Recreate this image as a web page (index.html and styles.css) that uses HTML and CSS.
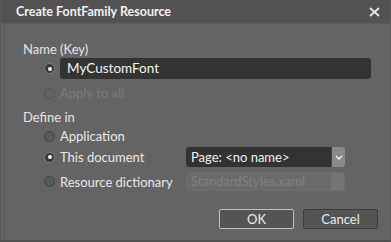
FILE: index.html
```html
<!DOCTYPE html>
<html>
<head>
    <title>Create FontFamily Resource</title>
    <meta charset="UTF-8">
    <link rel="stylesheet" href="styles.css">
</head>
<body>
    <div class="window">
        <div class="titlebar">
            <span class="title">Create FontFamily Resource</span>
            <svg class="close" width="11" height="10" viewBox="0 0 11 10">
                <path d="M1 1 L10 9 M10 1 L1 9" stroke="#e8e8e8" stroke-width="1.8" fill="none"/>
            </svg>
        </div>
        <div class="content">
            <div class="group-label label-name">Name (Key)</div>
            <div class="row row-input">
                <span class="radio checked"></span>
                <div class="text-input">MyCustomFont</div>
            </div>
            <div class="row row-apply">
                <span class="radio disabled"></span>
                <span class="option disabled-text">Apply to all</span>
            </div>

            <div class="group-label label-define">Define in</div>
            <div class="row row-app">
                <span class="radio"></span>
                <span class="option">Application</span>
            </div>
            <div class="row row-doc">
                <span class="radio checked"></span>
                <span class="option wide">This document</span>
                <div class="combo">
                    <span class="combo-text">Page: &lt;no name&gt;</span>
                    <span class="combo-arrow">
                        <svg width="8" height="5" viewBox="0 0 8 5"><path d="M1 1 L4 4 L7 1" stroke="#f0f0f0" stroke-width="1.5" fill="none"/></svg>
                    </span>
                </div>
            </div>
            <div class="row row-res">
                <span class="radio"></span>
                <span class="option wide">Resource dictionary</span>
                <div class="combo combo-disabled">
                    <span class="combo-text">StandardStyles.xaml</span>
                    <span class="combo-arrow"></span>
                </div>
            </div>

            <div class="buttons">
                <button class="btn btn-default">OK</button>
                <button class="btn">Cancel</button>
            </div>
        </div>
    </div>
</body>
</html>
```

FILE: styles.css
```css
body {
    margin: 0;
    background-color: #5a5a5a;
    font-family: Lato, "Open Sans", sans-serif;
}
.window {
    width: 391px;
    height: 242px;
    box-sizing: border-box;
    background-color: #646464;
    border-left: 1px solid #585858;
    border-right: 1px solid #585858;
    border-bottom: 2px solid #505050;
    overflow: hidden;
}
.titlebar {
    height: 23px;
    background-color: #525252;
    display: flex;
    align-items: center;
    padding: 0 10px 0 15px;
    border-bottom: 1px solid #5a5a5a;
}
.title {
    color: #f2f2f2;
    font-weight: bold;
    font-size: 12.5px;
    flex: 1;
}
.content {
    border-left: 2px solid #5c5c5c;
    margin-left: 2px;
    padding-left: 18px;
    height: 220px;
    box-sizing: border-box;
}
.group-label {
    color: #e4e4e4;
    font-size: 13px;
    height: 16px;
    line-height: 16px;
}
.label-name {
    padding-top: 17px;
}
.label-define {
    margin-top: 8px;
}
.row {
    display: flex;
    align-items: center;
    padding-left: 21px;
}
.row-input {
    height: 21px;
    margin-top: 1px;
}
.row-apply {
    height: 16px;
    margin-top: 6px;
}
.row-app {
    height: 16px;
    margin-top: 3px;
}
.row-doc {
    height: 20px;
    margin-top: 3px;
}
.row-res {
    height: 19px;
    margin-top: 5px;
}
.radio {
    width: 11px;
    height: 11px;
    box-sizing: border-box;
    border-radius: 50%;
    border: 1px solid #434343;
    background-color: #5a5a5a;
    margin-right: 5px;
    flex: none;
    position: relative;
}
.radio.checked {
    background-color: #3a3a3a;
    border-color: #808080;
}
.radio.checked::after {
    content: "";
    position: absolute;
    left: 2.5px;
    top: 2.5px;
    width: 4px;
    height: 4px;
    border-radius: 50%;
    background-color: #f4f4f4;
}
.radio.disabled {
    border-color: #535353;
    background-color: #636363;
}
.option {
    color: #e8e8e8;
    font-size: 13px;
}
.option.wide {
    width: 126px;
    flex: none;
}
.disabled-text {
    color: #7c7c7c;
}
.text-input {
    width: 311px;
    height: 21px;
    line-height: 21px;
    background-color: #333333;
    border-radius: 3px;
    color: #f4f4f4;
    font-size: 13.5px;
    padding-left: 7px;
    box-sizing: border-box;
}
.combo {
    width: 159px;
    height: 20px;
    display: flex;
    background-color: #333333;
    border-radius: 3px;
    box-sizing: border-box;
    overflow: hidden;
}
.combo-text {
    flex: 1;
    color: #f0f0f0;
    font-size: 13px;
    line-height: 20px;
    padding-left: 5px;
}
.combo-arrow {
    width: 13px;
    background-color: #8a8a8a;
    display: flex;
    align-items: center;
    justify-content: center;
    border-left: 1px solid #444;
}
.combo-disabled {
    height: 19px;
    background-color: #6a6a6a;
    border: 1px solid #6e6e6e;
}
.combo-disabled .combo-text {
    color: #808080;
    line-height: 17px;
    padding-left: 4px;
}
.combo-disabled .combo-arrow {
    background-color: #747474;
    border-left: 1px solid #6a6a6a;
}
.buttons {
    display: flex;
    justify-content: flex-end;
    gap: 9px;
    margin-top: 18px;
    padding-right: 12px;
}
.btn {
    width: 75px;
    height: 20px;
    box-sizing: border-box;
    background-color: #545454;
    border: 1px solid #3c3c3c;
    border-radius: 2px;
    color: #ececec;
    font-family: Lato, "Open Sans", sans-serif;
    font-size: 13px;
    padding: 0;
}
.btn-default {
    border: 1px solid #b4c2d0;
}
```
